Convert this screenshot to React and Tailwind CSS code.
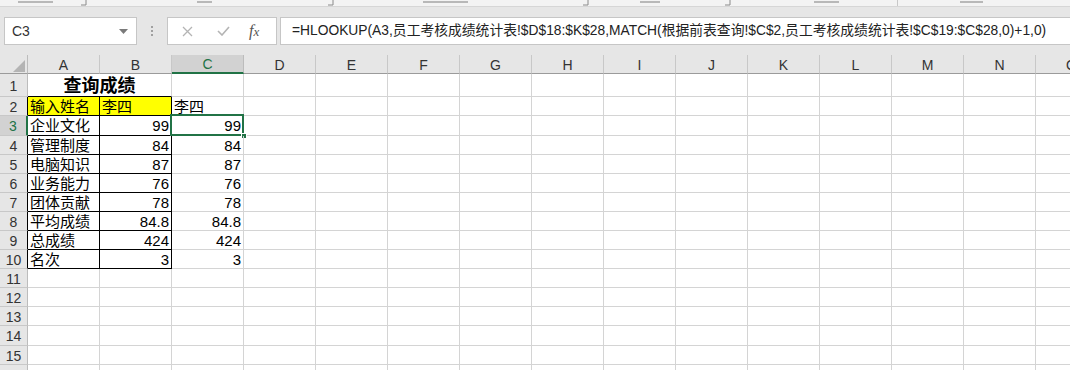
import React from "react";

const COLS = ["A", "B", "C", "D", "E", "F", "G", "H", "I", "J", "K", "L", "M", "N", "O"];

const ROWS = [
  { n: 1, h: "h-[23px]" },
  { n: 2, h: "h-[19px]", a: "输入姓名", b: "李四", c: "李四", text: true },
  { n: 3, h: "h-[20px]", a: "企业文化", b: "99", c: "99" },
  { n: 4, h: "h-[19px]", a: "管理制度", b: "84", c: "84" },
  { n: 5, h: "h-[19px]", a: "电脑知识", b: "87", c: "87" },
  { n: 6, h: "h-[19px]", a: "业务能力", b: "76", c: "76" },
  { n: 7, h: "h-[19px]", a: "团体贡献", b: "78", c: "78" },
  { n: 8, h: "h-[19px]", a: "平均成绩", b: "84.8", c: "84.8" },
  { n: 9, h: "h-[19px]", a: "总成绩", b: "424", c: "424" },
  { n: 10, h: "h-[19px]", a: "名次", b: "3", c: "3" },
  { n: 11, h: "h-[19px]" },
  { n: 12, h: "h-[19px]" },
  { n: 13, h: "h-[19px]" },
  { n: 14, h: "h-[20px]" },
  { n: 15, h: "h-[19px]" },
  { n: 16, h: "h-[19px]" },
];

const FORMULA =
  "=HLOOKUP(A3,员工考核成绩统计表!$D$18:$K$28,MATCH(根据前表查询!$C$2,员工考核成绩统计表!$C$19:$C$28,0)+1,0)";

function Launcher() {
  return (
    <svg width="10" height="6" viewBox="0 0 10 6" className="block">
      <path d="M8 0v5H3" fill="none" stroke="#8a8a8a" strokeWidth="1" />
    </svg>
  );
}

// bottoms of the group labels peeking out under the cut-off ribbon
function Stub({ w }) {
  return <span className={`${w} h-[2px] bg-[#b8b8b8] mt-[1px]`} />;
}

function Ribbon() {
  return (
    <div className="h-[7px] bg-[#f3f3f3] border-b border-[#d6d6d6] overflow-hidden flex items-start">
      <span className="ml-[18px]"><Stub w="w-[35px] block" /></span>
      <span className="ml-[25px]"><Launcher /></span>
      <span className="ml-[109px]"><Stub w="w-[15px] block" /></span>
      <span className="ml-[113px]"><Launcher /></span>
      <span className="ml-[88px]"><Stub w="w-[45px] block" /></span>
      <span className="ml-[112px]"><Launcher /></span>
      <span className="ml-[50px]"><Stub w="w-[20px] block" /></span>
      <span className="ml-[62px]"><Launcher /></span>
      <span className="ml-[82px]"><Stub w="w-[25px] block" /></span>
      <span className="ml-[58px] w-px h-[7px] bg-[#c8c8c8]" />
      <span className="ml-[62px]"><Stub w="w-[23px] block" /></span>
    </div>
  );
}

function FormulaBar() {
  return (
    <div className="h-[48px] bg-[#e6e6e6] pt-[10px] flex items-start">
      <div className="ml-[4px] w-[133px] h-[28px] bg-white border border-[#c6c6c6] flex items-center justify-between pl-[7px] pr-[8px]">
        <span className="text-[14px] text-[#333]">C3</span>
        <svg width="9" height="5" viewBox="0 0 9 5">
          <path d="M0 0h9L4.5 5z" fill="#7a7a7a" />
        </svg>
      </div>
      <div className="w-[30px] h-[28px] flex flex-col items-center justify-center gap-[2px]">
        <span className="w-[2px] h-[2px] bg-[#a0a0a0]" />
        <span className="w-[2px] h-[2px] bg-[#a0a0a0]" />
        <span className="w-[2px] h-[2px] bg-[#a0a0a0]" />
      </div>
      <div className="w-[110px] h-[28px] bg-white border border-[#c6c6c6] flex items-center">
        <svg width="11" height="11" viewBox="0 0 11 11" className="ml-[14px]">
          <path d="M1 1l9 9M10 1l-9 9" stroke="#b4b4b4" strokeWidth="1.3" />
        </svg>
        <svg width="13" height="10" viewBox="0 0 13 10" className="ml-[24px]">
          <path d="M1 5l4 4 7-8" fill="none" stroke="#b4b4b4" strokeWidth="1.6" />
        </svg>
        <span className="ml-[19px] text-[16px] italic text-[#555] font-['Liberation_Serif',serif]">
          f<span className="text-[13px]">x</span>
        </span>
      </div>
      <div className="ml-[3px] flex-1 h-[28px] bg-white border border-[#c6c6c6] border-r-0 flex items-center pl-[11px] whitespace-nowrap overflow-hidden">
        <span className="text-[13.8px] text-[#222]">{FORMULA}</span>
      </div>
    </div>
  );
}

function HeaderRow() {
  return (
    <div className="flex h-[19px]">
      <div className="w-[28px] shrink-0 bg-[#e6e6e6] border-r border-b border-r-[#bcbcbc] border-b-[#9b9b9b] flex items-end justify-end">
        <svg width="12" height="12" viewBox="0 0 12 12" className="mr-[2px] mb-[1px]">
          <path d="M12 0v12H0z" fill="#b4b4b4" />
        </svg>
      </div>
      {COLS.map((c) =>
        c === "C" ? (
          <div
            key={c}
            className="w-[72px] shrink-0 bg-[#d2d2d2] border-r border-r-[#bcbcbc] border-b-2 border-b-[#217346] flex items-center justify-center pt-[2px] text-[14px] text-[#217346]"
          >
            {c}
          </div>
        ) : (
          <div
            key={c}
            className="w-[72px] shrink-0 bg-[#e6e6e6] border-r border-b border-r-[#c8c8c8] border-b-[#9b9b9b] flex items-center justify-center pt-[2px] text-[14px] text-[#333]"
          >
            {c}
          </div>
        )
      )}
    </div>
  );
}

function RowHeader({ n }) {
  if (n === 3) {
    return (
      <div className="w-[28px] shrink-0 bg-[#d2d2d2] border-r-2 border-b border-r-[#217346] border-b-[#c8c8c8] flex items-center justify-center pt-[2px] text-[14px] text-[#217346]">
        {n}
      </div>
    );
  }
  const edge = n >= 2 && n <= 10 ? "border-r-black" : "border-r-[#bcbcbc]";
  return (
    <div
      className={`w-[28px] shrink-0 bg-[#e6e6e6] border-r border-b ${edge} border-b-[#c8c8c8] flex items-center justify-center pt-[2px] text-[14px] text-[#333]`}
    >
      {n}
    </div>
  );
}

function Row({ row }) {
  const { n, h } = row;
  const grey = "border-r border-b border-[#d4d4d4]";
  const boxed = "border-r border-b border-black";
  const rest = COLS.slice(3).map((c) => (
    <div key={c} className={`w-[72px] shrink-0 ${grey}`} />
  ));

  if (n === 1) {
    return (
      <div className={`flex ${h}`}>
        <RowHeader n={n} />
        <div className="w-[144px] shrink-0 border-r border-b border-r-[#d4d4d4] border-b-black flex items-center justify-center pt-[3px] text-[18px] font-bold text-black">
          查询成绩
        </div>
        <div className={`w-[72px] shrink-0 ${grey}`} />
        {rest}
      </div>
    );
  }

  const inTable = n <= 10;
  return (
    <div className={`flex ${h}`}>
      <RowHeader n={n} />
      <div
        className={`w-[72px] shrink-0 ${inTable ? boxed : grey} ${n === 2 ? "bg-[#ffff00]" : ""} flex items-center pt-[2px] pl-[2px] text-[15px] text-black overflow-hidden whitespace-nowrap`}
      >
        {row.a}
      </div>
      <div
        className={`w-[72px] shrink-0 ${inTable ? boxed : grey} ${n === 2 ? "bg-[#ffff00] justify-start pl-[2px]" : "justify-end pr-[2px]"} flex items-center pt-[2px] text-[15px] text-black`}
      >
        {row.b}
      </div>
      <div
        className={`relative w-[72px] shrink-0 ${grey} ${row.text ? "justify-start pl-[2px]" : "justify-end pr-[2px]"} flex items-center pt-[2px] text-[15px] text-black`}
      >
        {row.c}
        {n === 3 && (
          <>
            <div className="absolute left-[-2px] top-[-2px] w-[74px] h-[22px] border-2 border-[#217346]" />
            <div className="absolute right-[-4px] bottom-[-4px] w-[6px] h-[6px] bg-[#217346] border border-white" />
          </>
        )}
      </div>
      {rest}
    </div>
  );
}

export default function App() {
  return (
    <div className="w-[1070px] h-[370px] overflow-hidden bg-white font-['Liberation_Sans','Noto_Sans_CJK_SC',sans-serif]">
      <Ribbon />
      <FormulaBar />
      <div className="w-[1120px]">
        <HeaderRow />
        {ROWS.map((r) => (
          <Row key={r.n} row={r} />
        ))}
      </div>
    </div>
  );
}
